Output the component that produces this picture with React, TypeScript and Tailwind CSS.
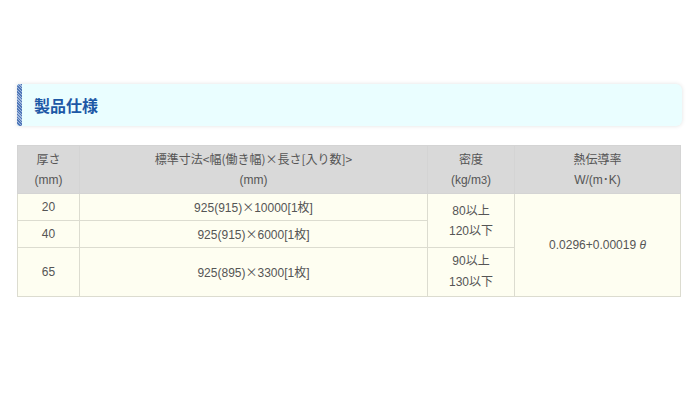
import React from "react";

const font = "font-['Liberation_Sans','Noto_Sans_CJK_JP',sans-serif]";
const cjk = "font-['Noto_Sans_CJK_JP',sans-serif]";

const App: React.FC = () => {
  return (
    <div className={`w-[700px] h-[400px] bg-white ${font} text-[12px] text-[#555]`}>
      <div className="pl-[17px] pr-[18px] pt-[84px]">
        {/* Heading */}
        <div className="flex h-[42px] rounded-r-[6px] bg-[#eafeff] shadow-[0_0_4px_rgba(0,0,0,0.12)]">
          <div className="w-[5px] rounded-l-[3px] bg-[repeating-linear-gradient(45deg,#4f77b8_0px,#4f77b8_1px,#9fb6dc_1px,#9fb6dc_2px)]" />
          <h2 className={`flex items-center pl-[12px] text-[16px] font-bold text-[#1d58a6] ${cjk}`}>
            製品仕様
          </h2>
        </div>

        {/* Spec table */}
        <table className="mt-[19px] w-[664px] border-collapse text-center">
          <thead>
            <tr className="bg-[#d9d9d9] h-[48px] leading-[20px] text-[#555]">
              <th className="w-[62px] border border-[#d4d4d4] font-normal">
                厚さ
                <br />
                (mm)
              </th>
              <th className="w-[348px] border border-[#d4d4d4] font-normal">
                <span className={cjk}>標準寸法&lt;幅(働き幅)×長さ[入り数]&gt;</span>
                <br />
                (mm)
              </th>
              <th className="w-[87px] border border-[#d4d4d4] font-normal">
                密度
                <br />
                (kg/m<span className="text-[11px]">3</span>)
              </th>
              <th className="border border-[#d4d4d4] font-normal">
                熱伝導率
                <br />
                W/(m･K)
              </th>
            </tr>
          </thead>
          <tbody className="bg-[#fefef1]">
            <tr className="h-[27px]">
              <td className="border border-[#dcdcd0]">20</td>
              <td className="border border-[#dcdcd0]">925(915)<span className={cjk}>×</span>10000[1枚]</td>
              <td rowSpan={2} className="border border-[#dcdcd0] leading-[20px]">
                80以上
                <br />
                120以下
              </td>
              <td rowSpan={3} className="border border-[#dcdcd0]">
                0.0296+0.00019 <span className="italic">θ</span>
              </td>
            </tr>
            <tr className="h-[27px]">
              <td className="border border-[#dcdcd0]">40</td>
              <td className="border border-[#dcdcd0]">925(915)<span className={cjk}>×</span>6000[1枚]</td>
            </tr>
            <tr className="h-[49px]">
              <td className="border border-[#dcdcd0]">65</td>
              <td className="border border-[#dcdcd0]">925(895)<span className={cjk}>×</span>3300[1枚]</td>
              <td className="border border-[#dcdcd0] leading-[21px]">
                90以上
                <br />
                130以下
              </td>
            </tr>
          </tbody>
        </table>
      </div>
    </div>
  );
};

export default App;
